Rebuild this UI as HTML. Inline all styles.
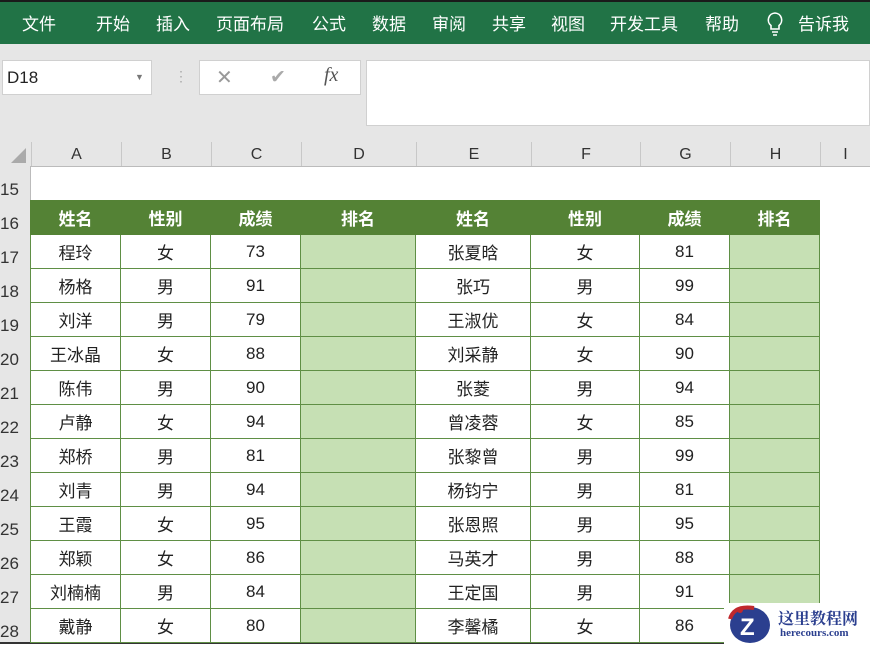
<!DOCTYPE html><html><head><meta charset="utf-8"><style>
body{margin:0;width:870px;height:646px;overflow:hidden;background:#fff;font-family:"Liberation Sans","Noto Sans CJK SC",sans-serif;position:relative}
.a{position:absolute}
.rib{left:0;top:0;width:870px;height:44px;background:#217346;border-top:2px solid #1a1a1a;box-sizing:border-box}
.rib span{position:absolute;top:8px;color:#fff;font-size:17px}
.fa{left:0;top:44px;width:870px;height:98px;background:#e6e6e6}
.ch{left:0;top:142px;width:870px;height:24px;background:#e6e6e6;border-bottom:1px solid #bbb}
.ch div{position:absolute;top:0;height:24px;line-height:26px;text-align:center;font-size:16px;color:#333;border-left:1px solid #c8c8c8;box-sizing:border-box}
.rh{position:absolute;left:0;width:31px;font-size:16px;color:#333;background:#e6e6e6;box-sizing:border-box;padding-left:2px;border-right:1px solid #bbb}
table{position:absolute;left:30px;top:200px;border-collapse:collapse}
td{border:1px solid #5f8f45;height:33px;padding:0;text-align:center;font-size:17px;color:#222}
tr.h td{background:#548235;color:#fff;font-weight:bold;border-color:#548235}
td.g{background:#c6e0b4}
</style></head><body>
<div class="a rib">
<span style="left:22px">文件</span><span style="left:96px">开始</span><span style="left:156px">插入</span><span style="left:216px">页面布局</span><span style="left:312px">公式</span><span style="left:372px">数据</span><span style="left:432px">审阅</span><span style="left:492px">共享</span><span style="left:551px">视图</span><span style="left:610px">开发工具</span><span style="left:705px">帮助</span>
<svg class="a" style="left:765px;top:9px" width="20" height="26"><path d="M10 2a7 7 0 0 0-4 12.5V18h8v-3.5A7 7 0 0 0 10 2zM7 21h6M8 24h4" stroke="#fff" stroke-width="1.6" fill="none"/></svg>
<span style="left:798px">告诉我</span></div>
<div class="a fa"></div>
<div class="a" style="left:2px;top:60px;width:150px;height:35px;background:#fff;border:1px solid #d0d0d0;box-sizing:border-box;font-size:17px;line-height:33px;padding-left:4px;color:#222">D18<span style="position:absolute;left:132px;font-size:9px;color:#777">▼</span></div>
<div class="a" style="left:174px;top:68px;color:#aaa;font-size:14px">⋮</div>
<div class="a" style="left:199px;top:60px;width:162px;height:35px;background:#fff;border:1px solid #d0d0d0;box-sizing:border-box">
<span class="a" style="left:16px;top:4px;font-size:20px;color:#999">✕</span><span class="a" style="left:70px;top:5px;font-size:19px;color:#aaa">✔</span><span class="a" style="left:124px;top:3px;font-size:20px;font-style:italic;font-family:'Liberation Serif',serif;color:#555">fx</span></div>
<div class="a" style="left:366px;top:60px;width:504px;height:66px;background:#fff;border:1px solid #d0d0d0;box-sizing:border-box"></div>
<div class="a ch">
<div style="left:0;width:31px;border:0"><svg width="31" height="24"><path d="M26 6V21H11Z" fill="#aaa"/></svg></div>
<div style="left:31px;width:90px">A</div><div style="left:121px;width:90px">B</div><div style="left:211px;width:90px">C</div><div style="left:301px;width:115px">D</div><div style="left:416px;width:115px">E</div><div style="left:531px;width:109px">F</div><div style="left:640px;width:90px">G</div><div style="left:730px;width:90px">H</div><div style="left:820px;width:50px">I</div></div>
<div class="rh" style="top:166px;height:476px"></div>
<div class="a" style="left:0;top:173px;font-size:17px;color:#333;line-height:34px;width:30px">
<div>15</div><div>16</div><div>17</div><div>18</div><div>19</div><div>20</div><div>21</div><div>22</div><div>23</div><div>24</div><div>25</div><div>26</div><div>27</div><div>28</div></div>
<div class="a" style="left:0;top:642px;width:730px;height:2px;background:#333"></div>
<table>
<colgroup><col style="width:90px"><col style="width:90px"><col style="width:90px"><col style="width:115px"><col style="width:115px"><col style="width:109px"><col style="width:90px"><col style="width:90px"></colgroup>
<tr class="h"><td>姓名</td><td>性别</td><td>成绩</td><td>排名</td><td>姓名</td><td>性别</td><td>成绩</td><td>排名</td></tr>
<tr><td>程玲</td><td>女</td><td>73</td><td class="g"></td><td>张夏晗</td><td>女</td><td>81</td><td class="g"></td></tr>
<tr><td>杨格</td><td>男</td><td>91</td><td class="g"></td><td>张巧</td><td>男</td><td>99</td><td class="g"></td></tr>
<tr><td>刘洋</td><td>男</td><td>79</td><td class="g"></td><td>王淑优</td><td>女</td><td>84</td><td class="g"></td></tr>
<tr><td>王冰晶</td><td>女</td><td>88</td><td class="g"></td><td>刘采静</td><td>女</td><td>90</td><td class="g"></td></tr>
<tr><td>陈伟</td><td>男</td><td>90</td><td class="g"></td><td>张菱</td><td>男</td><td>94</td><td class="g"></td></tr>
<tr><td>卢静</td><td>女</td><td>94</td><td class="g"></td><td>曾凌蓉</td><td>女</td><td>85</td><td class="g"></td></tr>
<tr><td>郑桥</td><td>男</td><td>81</td><td class="g"></td><td>张黎曾</td><td>男</td><td>99</td><td class="g"></td></tr>
<tr><td>刘青</td><td>男</td><td>94</td><td class="g"></td><td>杨钧宁</td><td>男</td><td>81</td><td class="g"></td></tr>
<tr><td>王霞</td><td>女</td><td>95</td><td class="g"></td><td>张恩照</td><td>男</td><td>95</td><td class="g"></td></tr>
<tr><td>郑颖</td><td>女</td><td>86</td><td class="g"></td><td>马英才</td><td>男</td><td>88</td><td class="g"></td></tr>
<tr><td>刘楠楠</td><td>男</td><td>84</td><td class="g"></td><td>王定国</td><td>男</td><td>91</td><td class="g"></td></tr>
<tr><td>戴静</td><td>女</td><td>80</td><td class="g"></td><td>李馨橘</td><td>女</td><td>86</td><td class="g"></td></tr>
</table>
<div class="a" style="left:724px;top:603px;width:146px;height:43px;background:#fff">
<svg class="a" style="left:2px;top:2px" width="50" height="40"><ellipse cx="24" cy="20" rx="20" ry="18" fill="#2b3f8f"/><path d="M4 14Q8 0 28 3" stroke="#c0282d" stroke-width="4" fill="none"/><circle cx="14" cy="5" r="3" fill="#c0282d"/><text x="14" y="30" font-size="24" font-weight="bold" fill="#fff" font-family="Liberation Sans">Z</text></svg>
<div class="a" style="left:54px;top:3px;font-size:16px;font-weight:bold;color:#2b3f8f;font-family:'Liberation Serif','Noto Serif CJK SC',serif">这里教程网</div>
<div class="a" style="left:56px;top:24px;font-size:11px;font-weight:bold;color:#2b3f8f;font-family:'Liberation Serif',serif">herecours.com</div></div>
</body></html>
